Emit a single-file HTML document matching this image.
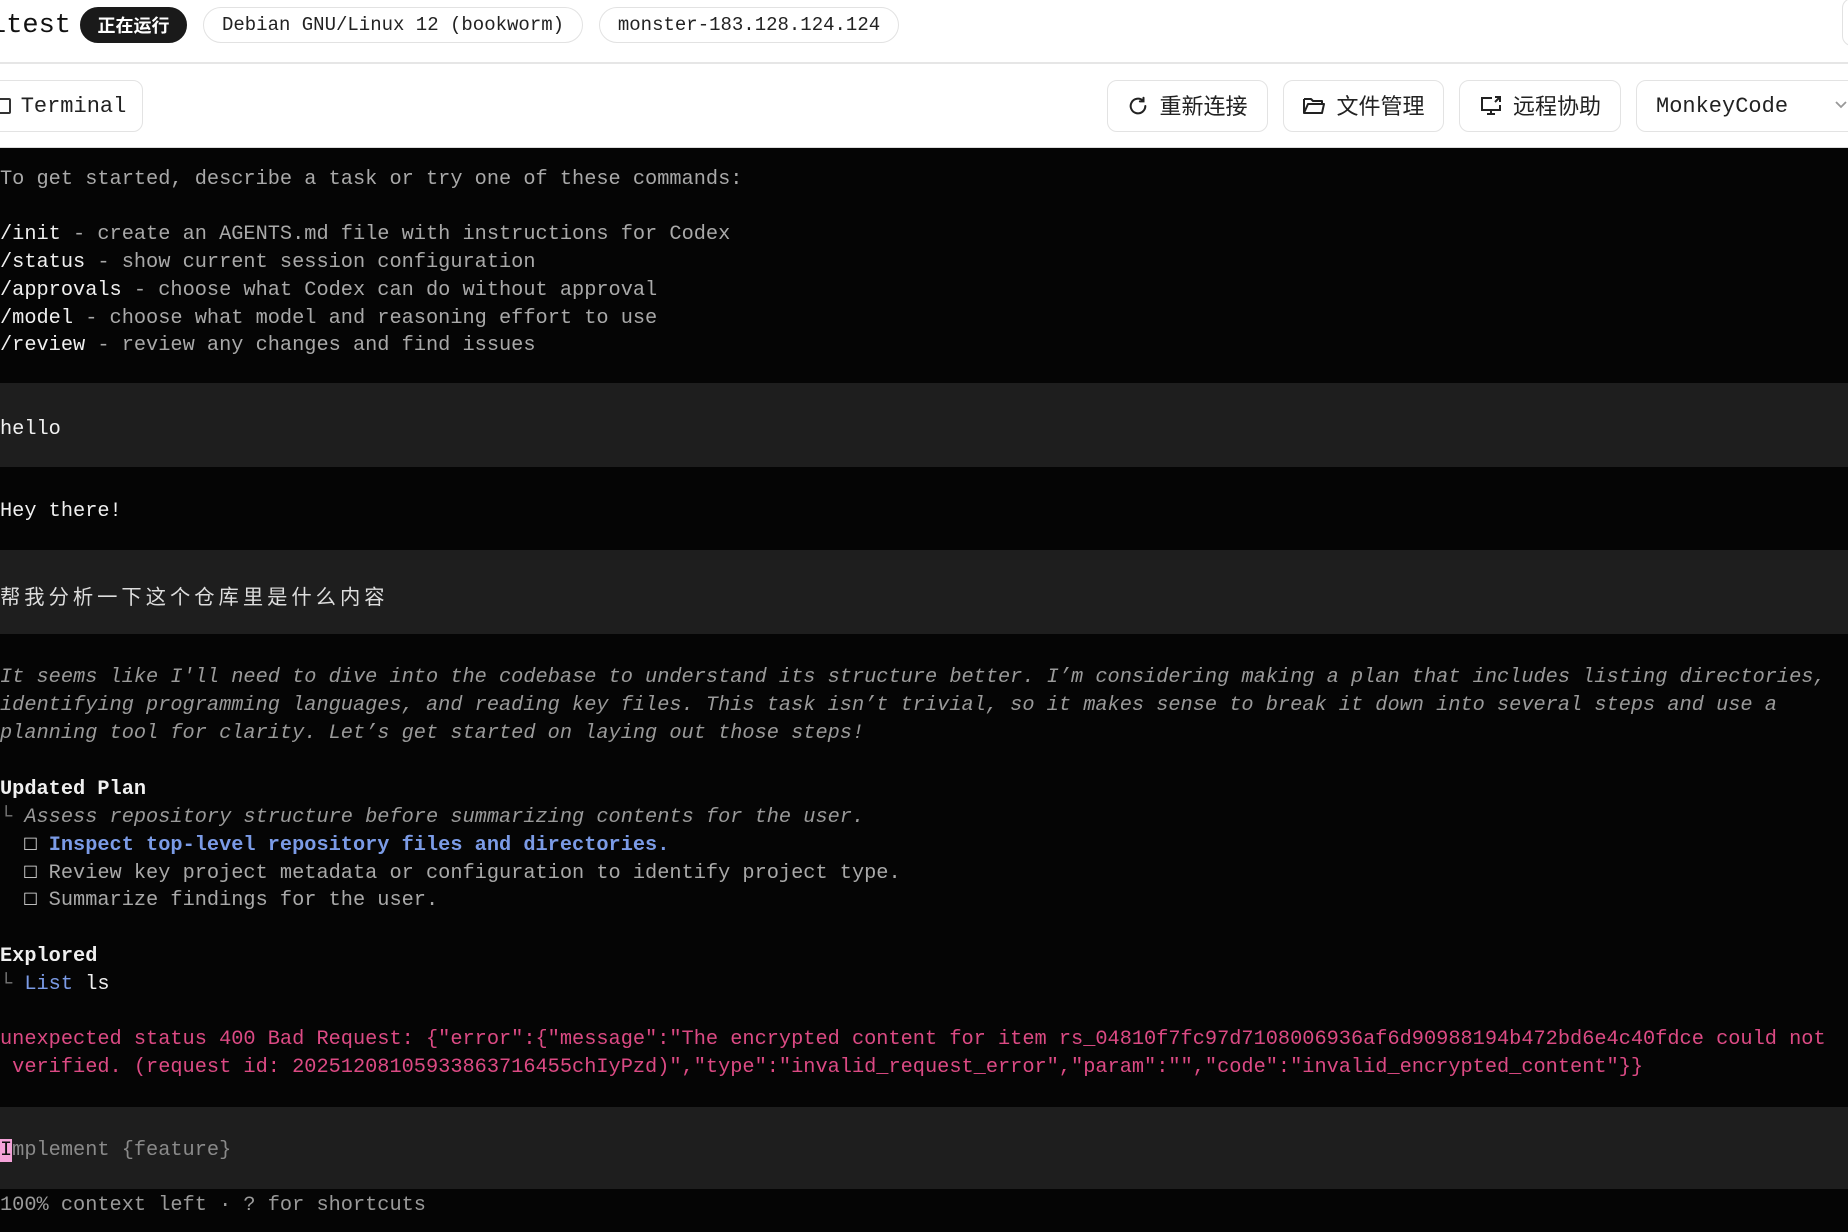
<!DOCTYPE html>
<html><head><meta charset="utf-8"><style>
*{margin:0;padding:0;box-sizing:border-box}
html,body{width:1848px;height:1232px;overflow:hidden;background:#fff}
body{position:relative;font-family:"Liberation Mono","Noto Sans CJK SC",monospace}
.hdr{position:absolute;left:0;top:0;width:1848px;height:64px;border-bottom:2px solid #e6e6e6;background:#fff}
.bar{position:absolute;left:0;top:64px;width:1848px;height:84px;background:#fff;border-bottom:1px solid #ddd}
.pill{position:absolute;top:7px;height:36px;border:1.5px solid #e2e2e2;border-radius:18px;font-size:19px;line-height:34px;text-align:center;color:#222}
.btn{position:absolute;top:80px;height:52px;border:1.5px solid #e3e3e3;border-radius:10px;background:#fff;font-family:"Liberation Sans","Noto Sans CJK SC",sans-serif;font-size:22px;line-height:49px;color:#222;display:flex;align-items:center;justify-content:center;gap:10px}
.term{position:absolute;left:0;top:148px;width:1848px;height:1084px;background:#050505}
.blk{position:absolute;left:0;width:1848px;background:#1e1e1e}
.l{position:absolute;left:0;height:28px;line-height:28px;font-size:20.3px;white-space:pre;color:#a9a9a9;margin-top:3px}
.w{color:#f0f0f0}
.b{font-weight:bold}
.i{font-style:italic;color:#9a9a9a}
.bl{color:#7b9be6}
.pk{color:#dc4a84}
.cn{font-family:"Noto Sans CJK SC",sans-serif;letter-spacing:4px;color:#ddd}
</style></head><body>
<div class="hdr">
 <div style="position:absolute;left:-10px;top:9px;font-size:27px;line-height:34px;color:#111">ltest</div>
 <div class="pill" style="left:80px;width:107px;background:#1a1a1a;border-color:#1a1a1a;color:#fff;font-family:'Noto Sans CJK SC',sans-serif;font-size:18px;font-weight:bold">正在运行</div>
 <div class="pill" style="left:203px;width:380px">Debian GNU/Linux 12 (bookworm)</div>
 <div class="pill" style="left:599px;width:300px">monster-183.128.124.124</div>
 <div style="position:absolute;left:1842px;top:-2px;width:30px;height:48px;border:1.5px solid #e2e2e2;border-radius:10px"></div>
</div>
<div class="bar"></div>
<div class="btn" style="left:-20px;width:163px;font-family:'Liberation Mono',monospace;font-size:22px"><span style="display:inline-block;width:14px;height:16px;border:2px solid #333;border-radius:2px"></span>Terminal</div>
<div class="btn" style="left:1107px;width:161px"><svg width="22" height="22" viewBox="0 0 24 24" fill="none" stroke="#222" stroke-width="2.2" stroke-linecap="round"><path d="M20 12a8 8 0 1 1-2.5-5.8"/><path d="M18 3v4h-4"/></svg>重新连接</div>
<div class="btn" style="left:1283px;width:161px"><svg width="24" height="22" viewBox="0 0 24 22" fill="none" stroke="#222" stroke-width="2" stroke-linejoin="round"><path d="M2 4h7l2 2h9v3"/><path d="M2 4v14h18l2-9H6l-4 9"/></svg>文件管理</div>
<div class="btn" style="left:1459px;width:162px"><svg width="24" height="24" viewBox="0 0 24 24" fill="none" stroke="#222" stroke-width="2"><path d="M13 4H3v12h18v-5"/><path d="M8 20h8M12 16v4"/><path d="M16 3h5v5M21 3l-5 5"/></svg>远程协助</div>
<div class="btn" style="left:1636px;width:240px;justify-content:flex-start;padding-left:19px;font-family:'Liberation Mono',monospace">MonkeyCode</div>
<svg style="position:absolute;left:1834px;top:100px" width="14" height="10" viewBox="0 0 14 10" fill="none" stroke="#999" stroke-width="1.8"><path d="M2 2l5 5 5-5"/></svg>

<div class="term">
 <div class="blk" style="top:235px;height:84px"></div>
 <div class="blk" style="top:402px;height:84px"></div>
 <div class="blk" style="top:959px;height:82px"></div>
</div>
<div class="l" style="top:163px">To get started, describe a task or try one of these commands:</div>
<div class="l" style="top:218px"><span class="w">/init</span> - create an AGENTS.md file with instructions for Codex</div>
<div class="l" style="top:246px"><span class="w">/status</span> - show current session configuration</div>
<div class="l" style="top:274px"><span class="w">/approvals</span> - choose what Codex can do without approval</div>
<div class="l" style="top:302px"><span class="w">/model</span> - choose what model and reasoning effort to use</div>
<div class="l" style="top:329px"><span class="w">/review</span> - review any changes and find issues</div>
<div class="l w" style="top:413px">hello</div>
<div class="l w" style="top:495px">Hey there!</div>
<div class="l cn" style="top:578px">帮我分析一下这个仓库里是什么内容</div>
<div class="l i" style="top:661px">It seems like I'll need to dive into the codebase to understand its structure better. I’m considering making a plan that includes listing directories,</div>
<div class="l i" style="top:689px">identifying programming languages, and reading key files. This task isn’t trivial, so it makes sense to break it down into several steps and use a</div>
<div class="l i" style="top:717px">planning tool for clarity. Let’s get started on laying out those steps!</div>
<div class="l w b" style="top:773px">Updated Plan</div>
<div class="l" style="top:801px"><span style="color:#777">└</span> <span class="i">Assess repository structure before summarizing contents for the user.</span></div>
<div class="l" style="top:829px">  <span class="w">□</span> <span class="bl b">Inspect top-level repository files and directories.</span></div>
<div class="l" style="top:857px">  <span class="w">□</span> Review key project metadata or configuration to identify project type.</div>
<div class="l" style="top:884px">  <span class="w">□</span> Summarize findings for the user.</div>
<div class="l w b" style="top:940px">Explored</div>
<div class="l" style="top:968px"><span style="color:#777">└</span> <span class="bl">List</span> <span class="w">ls</span></div>
<div class="l pk" style="top:1023px">unexpected status 400 Bad Request: {"error":{"message":"The encrypted content for item rs_04810f7fc97d7108006936af6d90988194b472bd6e4c40fdce could not</div>
<div class="l pk" style="top:1051px"> verified. (request id: 20251208105933863716455chIyPzd)","type":"invalid_request_error","param":"","code":"invalid_encrypted_content"}}</div>
<div class="l" style="top:1134px;color:#8a8a8a"><span style="background:#f4a3d9;color:#111">I</span>mplement {feature}</div>
<div class="l" style="top:1189px;color:#9a9a9a">100% context left · ? for shortcuts</div>
</body></html>
